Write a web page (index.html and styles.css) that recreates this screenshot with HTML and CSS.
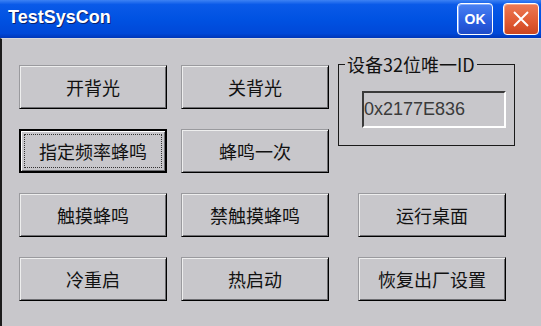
FILE: index.html
```html
<!DOCTYPE html>
<html lang="zh">
  <head>
    <meta charset="UTF-8" />
    <title>TestSysCon</title>
    <link rel="stylesheet" href="styles.css">
  </head>
  <body>
    <div class="window">
      <div class="titlebar">
        <span class="title">TestSysCon</span>
        <div class="caption-btns">
          <button class="cap ok">OK</button>
          <button class="cap close">
            <svg width="18" height="18" viewBox="0 0 18 18">
              <path d="M2 2 L16 16 M16 2 L2 16" stroke="#fff" stroke-width="2" fill="none" />
            </svg>
          </button>
        </div>
      </div>
      <div class="client">
        <div class="grid">
          <button class="btn c1">开背光</button>
          <button class="btn c2">关背光</button>
          <fieldset class="group">
            <legend>设备32位唯一ID</legend>
            <div class="idbox">0x2177E836</div>
          </fieldset>
          <button class="btn c1 focused">指定频率蜂鸣</button>
          <button class="btn c2">蜂鸣一次</button>
          <button class="btn c1">触摸蜂鸣</button>
          <button class="btn c2">禁触摸蜂鸣</button>
          <button class="btn c3">运行桌面</button>
          <button class="btn c1">冷重启</button>
          <button class="btn c2">热启动</button>
          <button class="btn c3">恢复出厂设置</button>
        </div>
      </div>
    </div>
  </body>
</html>
```

FILE: styles.css
```css
* {
  margin: 0;
  padding: 0;
  box-sizing: border-box;
}

html,
body {
  height: 100%;
}

body {
  background-color: #c8c7cb;
  font-family: "Noto Sans CJK SC", "Liberation Sans", sans-serif;
}

.window {
  height: 100%;
  display: flex;
  flex-direction: column;
}

.titlebar {
  height: 38px;
  display: flex;
  align-items: center;
  justify-content: space-between;
  padding: 0 2px 0 8px;
  background: linear-gradient(#3d82f4 0%, #0a5ae8 12%, #0052e2 50%, #0048d8 88%, #0036b8 100%);
}

.title {
  font-family: "Liberation Sans", sans-serif;
  font-weight: bold;
  font-size: 18px;
  color: #fff;
  text-shadow: 1px 1px 0 #0a1f6a;
  margin-top: -3px;
}

.caption-btns {
  display: flex;
  gap: 10px;
}

.cap {
  width: 36px;
  height: 32px;
  border: 1px solid #fff;
  border-radius: 4px;
  display: flex;
  align-items: center;
  justify-content: center;
  color: #fff;
}

.ok {
  background: linear-gradient(#4a82f2, #2a5de0 60%, #1e4bc8);
  box-shadow: inset 1px 1px 0 #86adff;
  font-family: "Liberation Sans", sans-serif;
  font-weight: bold;
  font-size: 14px;
}

.close {
  background: linear-gradient(#ec7a55, #e05a32 60%, #cc4620);
  box-shadow: inset 1px 1px 0 #f6a78c;
}

.client {
  flex: 1;
  border-left: 2px solid #1c1c1c;
  border-top: 1px solid #d8d8dc;
}

.grid {
  display: grid;
  grid-template-columns: 162px 157px 177px;
  grid-template-rows: repeat(4, 44px);
  row-gap: 20px;
  padding: 26px 0 0 17px;
}

.btn {
  width: 148px;
  height: 44px;
  background-color: #c8c7cb;
  border: 1px solid;
  border-color: #9a9a9e #000 #000 #9a9a9e;
  box-shadow: inset 1px 1px 0 #eeeeee, inset -1px -1px 0 #6e6e72;
  font-family: "Noto Sans CJK SC", sans-serif;
  font-size: 18px;
  color: #111;
}

.c1 {
  grid-column: 1;
}

.c2 {
  grid-column: 2;
}

.c3 {
  grid-column: 3;
  margin-left: 20px;
}

.btn.focused {
  border: 2px solid #000;
  box-shadow: inset 1px 1px 0 #fff, inset -1px -1px 0 #6e6e72;
  outline: 1px dotted #333;
  outline-offset: -6px;
}

.group {
  grid-column: 3;
  grid-row: 1 / span 2;
  align-self: start;
  margin-top: -10px;
  height: 91px;
  border: 1px solid #1a1a1a;
  padding: 0 0 0 6px;
}

.group legend {
  padding: 0 2px;
  font-size: 18px;
  line-height: 18px;
  color: #111;
}

.idbox {
  margin: 18px 0 0 17px;
  width: 144px;
  height: 37px;
  border: 2px solid;
  border-color: #3a3a3a #fff #fff #3a3a3a;
  font-family: "Liberation Sans", sans-serif;
  font-size: 18px;
  line-height: 33px;
  color: #3a3a3a;
}
```
